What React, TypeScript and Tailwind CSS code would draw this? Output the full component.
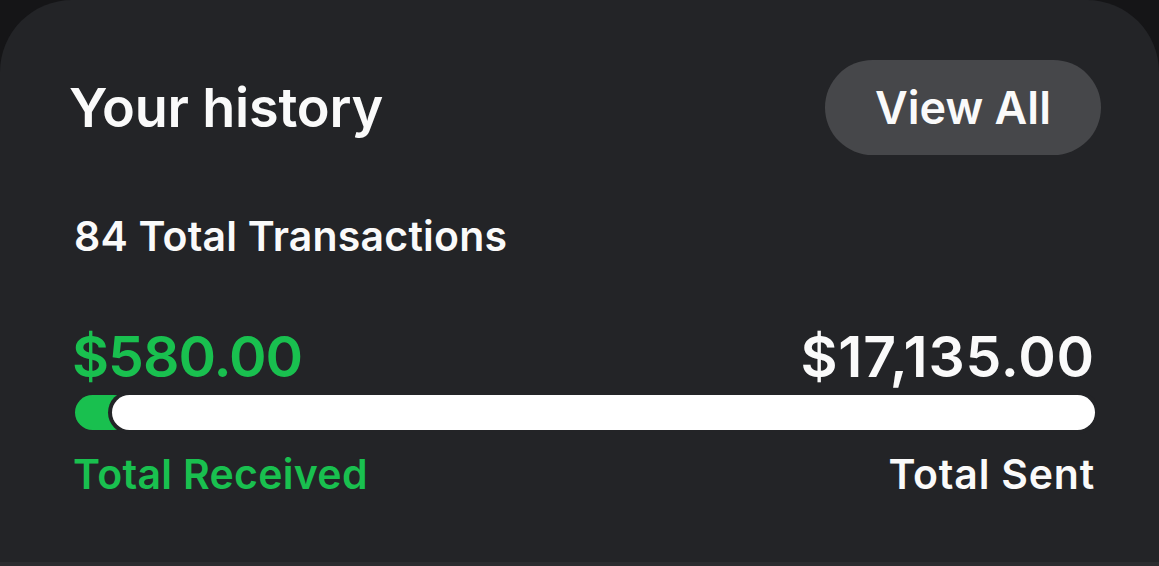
import React from "react";

export default function App() {
  const font = { fontFamily: "Inter, 'Noto Sans', sans-serif" };
  return (
    <div className="w-[1159px] h-[566px] bg-[#151517] flex flex-col" style={font}>
      <div className="flex-1 bg-[#232427] rounded-t-[72px] pl-[75px] pr-[64px] pt-[60px] flex flex-col">
        <div className="flex items-center justify-between">
          <h1 className="-ml-[6px] text-[54px] leading-none font-semibold text-[#fafafa] tracking-[-0.2px]">
            Your history
          </h1>
          <button className="-mr-[6px] h-[95px] w-[276px] rounded-full bg-[#46474a] text-[#fafafa] text-[45px] font-semibold tracking-[0px]">
            View All
          </button>
        </div>
        <div className="mt-[61px] -ml-[1px] text-[41px] leading-none font-semibold text-[#fafafa] tracking-[0.2px]">
          84 Total Transactions
        </div>
        <div className="mt-[71px] flex items-end justify-between">
          <span className="-ml-[3px] text-[57px] leading-none font-semibold text-[#19c04f] tracking-[-1px]">$580.00</span>
          <span className="text-[57px] leading-none font-semibold text-[#fafafa] tracking-[0.8px]">$17,135.00</span>
        </div>
        <div className="relative mt-[10px] h-[35px]">
          <div className="absolute left-0 top-0 h-full w-[56px] rounded-full bg-[#19c04f]" />
          <div className="absolute left-[37px] right-0 top-0 h-full rounded-full bg-white shadow-[0_0_0_4px_#232427]" />
        </div>
        <div className="mt-[24px] flex justify-between text-[41px] leading-none font-semibold">
          <span className="-ml-[2px] text-[#19c04f] tracking-[0.3px]">Total Received</span>
          <span className="text-[#fafafa] tracking-[0.8px]">Total Sent</span>
        </div>
      </div>
      <div className="h-[4px] bg-[#2b2c2f]" />
    </div>
  );
}
